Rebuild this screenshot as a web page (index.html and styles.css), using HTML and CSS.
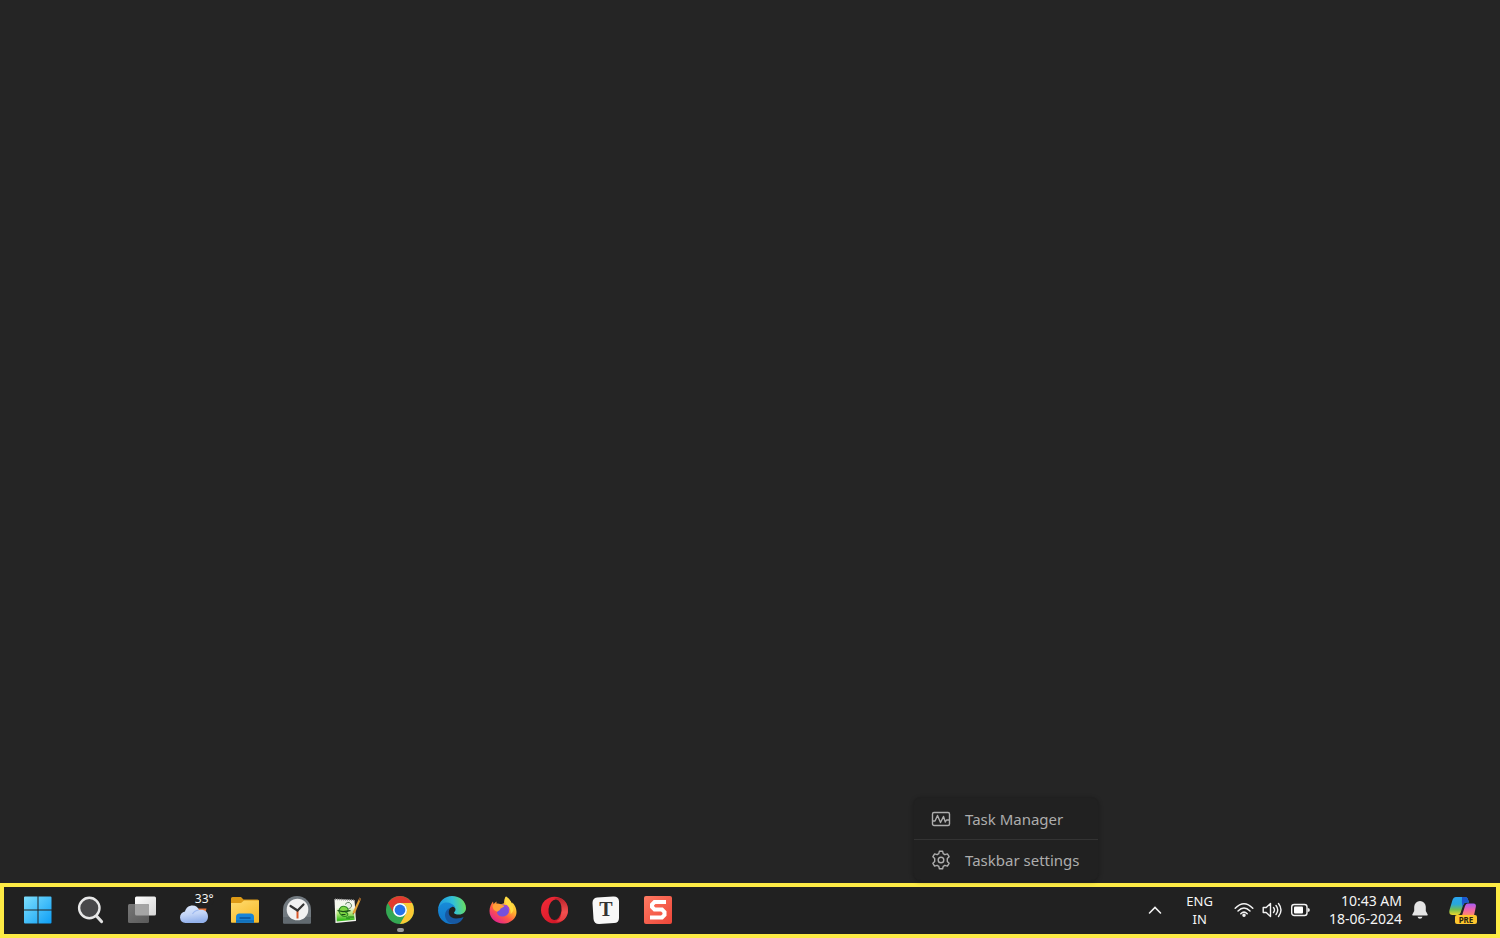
FILE: index.html
```
<!DOCTYPE html>
<html lang="en">
<head>
<meta charset="utf-8">
<title>Desktop</title>
<link rel="stylesheet" href="styles.css">
</head>
<body class="desktop">
<main class="wallpaper" aria-label="Desktop"></main>
<div class="menu" role="menu">
  <button class="menu-item" role="menuitem">
    <svg class="menu-icon" viewBox="0 0 20 20" fill="none" stroke="currentColor" stroke-width="1.4" stroke-linejoin="round" stroke-linecap="round"><rect x="1.500" y="3.500" width="17" height="13" rx="1.500"/><path d="M2 12h2L6.500 6.500l3 7 3-6 1.800 5.500 1.200-2H18"/></svg>
    Task Manager
  </button>
  <button class="menu-item" role="menuitem">
    <svg class="menu-icon" viewBox="0 0 20 20" fill="none" stroke="currentColor" stroke-width="1.4" stroke-linejoin="round"><circle cx="10" cy="10" r="2.800"/><path d="M8.400 1.200h3.200l.6 2.500 1.700 1 2.500-.8 1.700 2.800-1.800 1.800v3l1.800 1.800-1.700 2.800-2.500-.8-1.700 1-.6 2.500H8.400l-.6-2.500-1.700-1-2.500.8-1.700-2.800 1.800-1.800v-3L1.900 6.700l1.700-2.800 2.500.8 1.700-1z"/></svg>
    Taskbar settings
  </button>
</div>
<footer class="taskbar">
  <nav class="apps" aria-label="Apps">
    <button class="app start" aria-label="Start">
      <svg class="icon" viewBox="0 0 28 28"><defs><linearGradient id="win" x1="0" y1="0" x2="28" y2="28" gradientUnits="userSpaceOnUse"><stop stop-color="#7fe0fd"/><stop offset="1" stop-color="#0b9df5"/></linearGradient></defs><path fill="url(#win)" d="M1 .5h12.500v13H0v-12a1 1 0 0 1 1-1zM14.500.5H26.500a1 1 0 0 1 1 1v12h-13zM0 14.500h13.500v13H1a1 1 0 0 1-1-1zM14.500 14.500h13v12a1 1 0 0 1-1 1H14.500z"/></svg>
    </button>
    <button class="app" aria-label="Search">
      <svg class="icon" viewBox="0 0 28 28"><path d="M19 19.500l5.500 6" stroke="#e2e2e2" stroke-width="3.200" stroke-linecap="round"/><circle cx="12.300" cy="12" r="10.200" fill="#48484a" stroke="#e8e8e8" stroke-width="2.400"/></svg>
    </button>
    <button class="app" aria-label="Task view">
      <svg class="icon" viewBox="0 0 28 28"><defs><linearGradient id="tv" x2="1" y2="1"><stop stop-color="#fff"/><stop offset="1" stop-color="#d5d5d5"/></linearGradient><linearGradient id="tg" x2="1" y2="1"><stop stop-color="#777"/><stop offset="1" stop-color="#5a5a5a"/></linearGradient></defs><rect x="7" y=".5" width="21" height="19" rx="1.500" fill="url(#tv)"/><rect x="0" y="8" width="21" height="19" rx="1.500" fill="url(#tg)"/><path d="M7 8h12.500a1.500 1.500 0 0 1 1.500 1.500v10H8.500A1.500 1.500 0 0 1 7 18z" fill="#a5a5a5"/></svg>
    </button>
    <button class="app" aria-label="Weather, 33 degrees">
      <svg class="icon" viewBox="0 0 28 28"><defs><linearGradient id="cl" x2=".2" y2="1"><stop stop-color="#dce8fd"/><stop offset=".55" stop-color="#c3d5f7"/><stop offset="1" stop-color="#93b1eb"/></linearGradient></defs><path d="M17 12.500h9.500l-1 4H18z" fill="#e8743a"/><path d="M5.500 27A6 6 0 0 1 0 21.500c0-3.500 2-5.500 5-6 1-4 4-6 7.500-6 3.500 0 5.500 2 6.500 4.500 5.500-.8 9 2 9 6.500 0 4-2.500 6.500-6 6.500z" fill="url(#cl)"/><path d="M12.500 18c1.500-2.500 3.500-3.600 6-3.800" fill="none" stroke="#9fbaf0" stroke-width="1.200"/></svg>
      <span class="degrees">33°</span>
    </button>
    <button class="app" aria-label="File Explorer">
      <svg class="icon" viewBox="0 0 28 28"><defs><linearGradient id="fo" x2=".7" y2="1"><stop stop-color="#ffdc70"/><stop offset="1" stop-color="#f7bb2c"/></linearGradient></defs><path d="M0 2.500A1.500 1.500 0 0 1 1.500 1H10l2.500 2.500H26.500A1.500 1.500 0 0 1 28 5v8H0z" fill="#dd9a16"/><path d="M0 7h10l3-2.500h15V26a.8.8 0 0 1-.8.800H.8A.8.8 0 0 1 0 26z" fill="url(#fo)"/><path d="M5 26.800V21a3.500 3.500 0 0 1 3.500-3.500h11A3.500 3.500 0 0 1 23 21v5.800z" fill="#1684d8"/><path d="M8.500 22h11" stroke="#0a5299" stroke-width="1.500"/><path d="M5 26.800V24h18v2.800z" fill="#1272bd"/></svg>
    </button>
    <button class="app" aria-label="Clock">
      <svg class="icon" viewBox="0 0 28 28"><path d="M0 14a14 14 0 0 1 28 0v12.500a1 1 0 0 1-1 1H1a1 1 0 0 1-1-1z" fill="#727a80"/><path d="M0 21h28v5.500a1 1 0 0 1-1 1H1a1 1 0 0 1-1-1z" fill="#626a70"/><circle cx="14.500" cy="13.500" r="10.800" fill="#f1f1f1"/><path d="M14.500 14v8.500" stroke="#d75528" stroke-width="2"/><path d="M7.500 10l7 4.500 6-6" fill="none" stroke="#333" stroke-width="2.200" stroke-linecap="round"/></svg>
    </button>
    <button class="app" aria-label="Notepad++">
      <svg class="icon" viewBox="0 0 28 28"><defs><linearGradient id="np" x2="0" y2="1"><stop offset=".3" stop-color="#f4f8ec"/><stop offset=".6" stop-color="#b4e878"/><stop offset=".9" stop-color="#3dbd22"/></linearGradient></defs><path d="M.5 3l20 1 1.500 21L1.500 27z" fill="#f5f5ef"/><path d="M2 5.500l17.300.7 1.400 17.600-18 1.700z" fill="url(#np)"/><path d="M1 3.300l19.500 1" stroke="#9a9a9a" stroke-width="1.600" stroke-dasharray="1 1"/><path d="M5 15.500c0-4 3-6 6-5 4 1 4 5 1 6 3 1 2 4-1 4-3-.2-5-2-6-5z" fill="#7fd545" stroke="#2d8a23" stroke-width="1.100"/><path d="M11.500 8.500a2.800 2.800 0 0 1 5-1c2 2 .8 5-2 5" fill="#e7efe4" stroke="#5b7a5a" stroke-width="1"/><path d="M3.500 14.500l5.500 1.200 7.500-1M7.500 18.500h4" fill="none" stroke="#194b16" stroke-width="1.200"/><path d="M12 22h2m1-2v3m2-3v2m2-2v2" stroke="#197818"/><path d="M25.500 1.500L27 3l-6 14-2.200 1.500.2-3z" fill="#e0a034"/><path d="M25.500 1.500L27 3l-1 2-1.500-1z" fill="#86502a"/><path d="M18.900 17l-.1 1.500 1-.6z" fill="#222"/></svg>
    </button>
    <button class="app running" aria-label="Google Chrome">
      <svg class="icon" viewBox="0 0 28 28"><circle cx="14" cy="14" r="14" fill="#34a853"/><path d="M1.880 7A14 14 0 0 1 26.120 7H14a7 7 0 0 0-6.060 10.500z" fill="#e13b2f"/><path d="M26.120 7A14 14 0 0 1 14 28l6.060-10.500A7 7 0 0 0 14 7z" fill="#fcc934"/><circle cx="14" cy="14" r="7" fill="#fff"/><circle cx="14" cy="14" r="5.400" fill="#2673e8"/></svg>
    </button>
    <button class="app" aria-label="Microsoft Edge">
      <svg class="icon" viewBox="0 0 28 28"><defs><linearGradient id="e1" x1="0" y1=".5" x2="1" y2=".4"><stop stop-color="#1c95df"/><stop offset=".55" stop-color="#32c0d8"/><stop offset="1" stop-color="#6be05b"/></linearGradient><linearGradient id="e2" x2="0" y2="1"><stop stop-color="#178bd8"/><stop offset="1" stop-color="#1175c8"/></linearGradient></defs><path d="M0 13C1 5 7 0 14 0c8 0 14 5.500 14 12 0 4-3 6.500-7 6.500-3 0-5-.8-5-1.800 0-.7 1.500-1.200 1.500-3.200C17.500 9.500 8 5 0 13z" fill="url(#e1)"/><path d="M0 14C1 8.500 5.500 6 9.500 6.500c5 .5 8 4 8 7 0-2-2-3-3.500-2.500-4 1.500-5 6-3.500 10 1.200 3.500 4 6 7 6.500C9 30 0 24 0 14z" fill="url(#e2)"/><path d="M12 12c-3 5-.5 10.500 6 10.500 4 0 6-.8 7.500-1.500C24 25 20.500 28 16 28c-5 0-9-4-9-9 0-3 2-6 5-7z" fill="#1759a3"/></svg>
    </button>
    <button class="app" aria-label="Firefox">
      <svg class="icon" viewBox="0 0 28 28"><defs><linearGradient id="ff" x1=".85" y1=".1" x2=".25" y2=".95"><stop stop-color="#ffe84a"/><stop offset=".35" stop-color="#ffb32c"/><stop offset=".65" stop-color="#ff5a45"/><stop offset="1" stop-color="#e3258a"/></linearGradient></defs><path d="M17 .5c3 2 4.500 4.500 6 7.500l.5-1.500c2.500 3 4 6 4 9.500 0 7-6.500 11.500-13.500 11.500S.5 22.500.5 15c0-4 1.500-7 3.500-9.500l.5 2.500L7.500 5.500v2.800h4.500l3-1C15 4.500 15.500 2 17 .5z" fill="url(#ff)"/><path d="M8.500 10.500c3-3.500 10.500-2.500 11.500 3.500.5 4-3 6.500-6.500 6.500-4 0-6-2.500-5.500-6z" fill="#7650dc"/><path d="M14 9.500c4 1 6 4 5 7.500 2-2.500 2-6-1-8z" fill="#a147d5"/><path d="M3.500 10c2-3 6-3 8.500-1.500 1 1 3 .8 3.500 1.500-1 1.800-4 1.800-4.500 3.500 0 1.500-2.500 1.200-2.500 2.200C6 15 4 14 3.500 10z" fill="#ffa037"/><path d="M17 .5c5 3.500 7 8.500 7.500 13-.5 2-1.500 3.500-3 4.500.5-3.500-.5-6-3-8.500C16 7.500 15 3.500 17 .5z" fill="#ffdb42"/></svg>
    </button>
    <button class="app" aria-label="Opera">
      <svg class="icon" viewBox="0 0 28 28"><defs><linearGradient id="op" x2="1" y2="1"><stop stop-color="#f42c38"/><stop offset=".6" stop-color="#dc1c2c"/><stop offset="1" stop-color="#b91222"/></linearGradient><linearGradient id="oq" x2="0" y2="1"><stop stop-color="#b9222b"/><stop offset=".6" stop-color="#f2504f"/><stop offset="1" stop-color="#e43b3e"/></linearGradient></defs><ellipse cx="13.500" cy="14" rx="13.500" ry="13.300" fill="url(#op)"/><path d="M13 3C20-1 27 6 27 14S21 28 14 25c5 0 6.500-5.500 6.500-11S18.500 3 13 3z" fill="url(#oq)"/><ellipse cx="14" cy="13.800" rx="6.500" ry="10.300" fill="#212121" transform="rotate(6 14 13.800)"/></svg>
    </button>
    <button class="app" aria-label="Typora">
      <svg class="icon" viewBox="0 0 28 28"><path d="M5 1.500L21 .5Q26.500 0 27 5v17q0 5-5 5L7 28Q2 28 1.500 23L.5 7Q.5 2 5 1.500z" fill="#f8f8f8"/><text class="typora-letter" x="14" y="20" text-anchor="middle">T</text></svg>
    </button>
    <button class="app" aria-label="Snagit">
      <svg class="icon" viewBox="0 0 28 28"><defs><linearGradient id="sn" x2="1" y2="1"><stop stop-color="#ff7a62"/><stop offset="1" stop-color="#ed4639"/></linearGradient></defs><rect width="28" height="28" rx="2" fill="url(#sn)"/><path d="M22 6H10.500L8 8.500v2.500l2.500 2.500h7.500l2.500 2.500v3L18 21.500H6" fill="none" stroke="#fff" stroke-width="4"/></svg>
    </button>
  </nav>
  <div class="tray">
    <button class="tray-button chevron" aria-label="Show hidden icons"><svg class="chevron-icon" viewBox="0 0 14 14"><path d="M1.500 10L7 4.500l5.500 5.500" fill="none" stroke="#f2f2f2" stroke-width="1.600" stroke-linecap="round"/></svg></button>
    <button class="tray-button language">ENG<br>IN</button>
    <button class="tray-button status" aria-label="Network, volume and battery">
      <svg class="status-icon" viewBox="0 0 20 20" fill="none" stroke="#f2f2f2" stroke-width="1.500" stroke-linecap="round"><path d="M1.200 8.200q8.800-9 17.600 0M4 11q6-6 12 0M6.800 13.700q3.200-3.200 6.400 0"/><circle cx="10" cy="15.300" r="1" fill="#f2f2f2"/></svg>
      <svg class="status-icon" viewBox="0 0 20 20" fill="none" stroke="#f2f2f2" stroke-width="1.400" stroke-linecap="round" stroke-linejoin="round"><path d="M1.200 7.500h3l4.300-4v13l-4.300-4h-3zM11.500 7.500q2 2.500 0 5M14 5.500q3.500 4.500 0 9M16.500 3.500q5 6.500 0 13"/></svg>
      <svg class="status-icon" viewBox="0 0 20 20"><rect x="1.700" y="4.500" width="15.300" height="11" rx="2.500" fill="none" stroke="#f2f2f2" stroke-width="1.400"/><rect x="4" y="6.500" width="9" height="7" rx="1" fill="#fff"/><path d="M17.700 8q2.200 0 2.200 2t-2.200 2z" fill="#f2f2f2"/></svg>
    </button>
    <button class="tray-button clock">10:43 AM<br>18-06-2024</button>
    <button class="tray-button bell" aria-label="Notifications"><svg class="bell-icon" viewBox="0 0 16 20"><path d="M8 1a5.800 5.800 0 0 1 5.800 5.800V11l1.900 3.500q.3 1-.7 1H1q-1 0-.7-1L2.200 11V6.800A5.800 5.800 0 0 1 8 1zM5.500 16.800h5q-.5 2-2.500 2t-2.500-2z" fill="#e5e5e5"/></svg></button>
    <button class="tray-button copilot" aria-label="Copilot preview">
      <svg class="icon" viewBox="0 0 28 28"><defs><linearGradient id="c1" x2="0" y2="1"><stop stop-color="#2ba5f0"/><stop offset=".4" stop-color="#28a7dc"/><stop offset=".7" stop-color="#72bd52"/><stop offset="1" stop-color="#eed82b"/></linearGradient><linearGradient id="c2" x2="0" y2="1"><stop stop-color="#a75cf5"/><stop offset=".5" stop-color="#ee63ac"/><stop offset="1" stop-color="#ff8b66"/></linearGradient></defs><path d="M7 1h9q2.500 0 3.200 3l.8 2.500h-3q-2 0-3 3l-2.500 7.500q-1 2-3 2H3.500Q-.5 19 .5 14L3.500 4Q4.500 1 7 1z" fill="url(#c1)"/><path d="M13 1h3q2.500 0 3.200 3l.8 2.500h-3q-2 0-3 3L13.500 11q-1-5-.5-10z" fill="#1b58d0"/><path d="M18.500 7.500h6q3 0 2.300 3.500L25 19.500H13L16 10q.8-2.500 2.500-2.500z" fill="url(#c2)"/></svg>
      <span class="pre">PRE</span>
    </button>
  </div>
</footer>
</body>
</html>
```
FILE: styles.css
```
* { box-sizing: border-box; }
.desktop {
  position: relative;
  display: flex;
  flex-direction: column;
  min-height: 100vh;
  margin: 0;
  background: #252525;
  color: #f5f5f5;
  font-family: "Noto Sans", "Open Sans", sans-serif;
  font-size: 14px;
}
.wallpaper { flex: 1; }
button {
  margin: 0;
  padding: 0;
  border: 0;
  background: none;
  color: inherit;
  font: inherit;
}
svg { display: block; flex: none; }

.menu {
  position: absolute;
  left: 913px;
  bottom: 57px;
  width: 186px;
  border: 1px solid #202020;
  border-radius: 8px;
  background: #212121;
  box-shadow: 0 1px 4px rgba(0, 0, 0, 0.25);
}
.menu-item {
  display: flex;
  align-items: center;
  gap: 14px;
  width: 100%;
  height: 41px;
  padding: 0 0 0 17px;
  color: #adadad;
  font-size: 15px;
  white-space: nowrap;
}
.menu-item + .menu-item { border-top: 1px solid #333; }
.menu-icon { width: 20px; height: 20px; }

.taskbar {
  display: flex;
  align-items: center;
  justify-content: space-between;
  height: 55px;
  padding: 0 19px 2px 20px;
  border: 4px solid #fdeb45;
  background: #212121;
}
.apps {
  display: flex;
  justify-content: space-between;
  width: 648px;
}
.app { position: relative; width: 28px; height: 28px; }
.start { margin-right: 1px; }
.icon { width: 28px; height: 28px; }
.degrees {
  position: absolute;
  top: -4px;
  right: -6px;
  padding-left: 2px;
  border-radius: 6px;
  background: #212121;
  font-size: 12px;
  line-height: 14px;
}
.running::after {
  content: "";
  position: absolute;
  bottom: -8px;
  left: 11px;
  width: 7px;
  height: 4px;
  border-radius: 2px;
  background: #9b9b9b;
}
.typora-letter {
  fill: #333;
  font: bold 20px "Liberation Serif", serif;
}
.tray { display: flex; align-items: center; }
.tray-button { line-height: 18px; }
.chevron { margin-right: 24px; }
.chevron-icon { width: 14px; height: 14px; }
.language { text-align: center; font-size: 13px; }
.status { display: flex; gap: 8px; margin: 0 19px 0 21px; }
.status-icon { width: 20px; height: 20px; }
.clock { text-align: right; }
.bell { margin: 0 21px 0 10px; }
.bell-icon { width: 16px; height: 20px; }
.copilot { position: relative; width: 28px; height: 28px; }
.pre {
  position: absolute;
  right: 0;
  bottom: 0;
  width: 22px;
  border-radius: 2px;
  background: #fdc52e;
  color: #29220d;
  font-size: 8px;
  font-weight: 700;
  line-height: 9px;
  text-align: center;
}
```
